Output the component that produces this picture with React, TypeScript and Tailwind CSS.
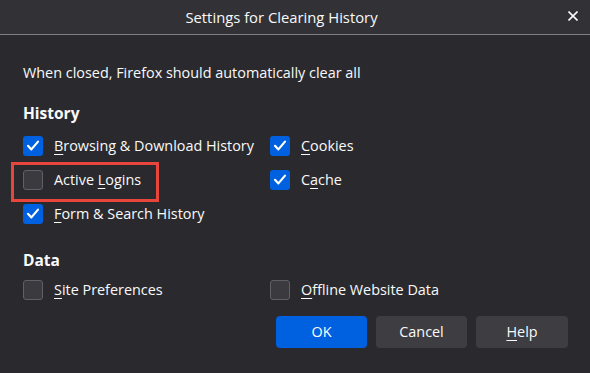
import React from "react";

// Firefox "Settings for Clearing History" dialog, dark theme

type Item = {
  label: string;
  key: number; // index of the access-key letter
  checked: boolean;
};

const historyLeft: Item[] = [
  { label: "Browsing & Download History", key: 0, checked: true },
  { label: "Active Logins", key: 7, checked: false },
  { label: "Form & Search History", key: 0, checked: true },
];

const historyRight: Item[] = [
  { label: "Cookies", key: 0, checked: true },
  { label: "Cache", key: 1, checked: true },
];

function AccessLabel({ text, index }: { text: string; index: number }) {
  return (
    <span>
      {text.slice(0, index)}
      <span className="underline underline-offset-[3px] decoration-1">{text[index]}</span>
      {text.slice(index + 1)}
    </span>
  );
}

function Checkbox({ item }: { item: Item }) {
  return (
    <div className="flex items-center h-[34px] gap-[11px]">
      {item.checked ? (
        <div className="w-5 h-5 rounded-[3px] bg-[#0061e0] flex items-center justify-center">
          <svg width="20" height="20" viewBox="0 0 20 20" fill="none">
            <path d="M5 9.8 L8.4 13.4 L15 5.6" stroke="#ffffff" strokeWidth="2.2" strokeLinecap="round" strokeLinejoin="round" />
          </svg>
        </div>
      ) : (
        <div className="w-5 h-5 rounded-[3px] bg-[#3a3a3f] border border-[#5f5f66]" />
      )}
      <AccessLabel text={item.label} index={item.key} />
    </div>
  );
}

export default function App() {
  return (
    <div
      className="w-[590px] h-[373px] bg-[#2a2a2e] text-[#f9f9fa] text-[14.4px] flex flex-col"
      style={{ fontFamily: "'Open Sans', 'Noto Sans', sans-serif" }}
    >
      {/* Title bar */}
      <div className="relative h-[35px] bg-[#323236] border-b border-[#7f7f84] flex items-center justify-center pr-[27px]">
        <span className="text-[14.8px]">Settings for Clearing History</span>
        <svg className="absolute right-[12px] top-[11px]" width="10" height="10" viewBox="0 0 10 10">
          <path d="M0.5 0.5 L9.5 9.5 M9.5 0.5 L0.5 9.5" stroke="#f9f9fa" strokeWidth="1.6" />
        </svg>
      </div>

      <div className="px-[23px] pt-[27px]">
        <p className="leading-[22px]">When closed, Firefox should automatically clear all</p>

        <h3 className="mt-[18px] text-[15.5px] font-bold leading-[22px]">History</h3>
        <div className="mt-[5px] grid grid-cols-[247px_1fr]">
          <div>
            {historyLeft.map((item) => (
              <div key={item.label} className="relative">
                {item.label === "Active Logins" && (
                  <div className="absolute left-[-12px] top-[-1px] w-[148px] h-[40px] border-[3px] border-[#e8453c]" />
                )}
                <Checkbox item={item} />
              </div>
            ))}
          </div>
          <div>
            {historyRight.map((item) => (
              <Checkbox key={item.label} item={item} />
            ))}
          </div>
        </div>

        <h3 className="mt-[18px] text-[15.5px] font-bold leading-[22px]">Data</h3>
        <div className="mt-[2px] grid grid-cols-[247px_1fr]">
          <Checkbox item={{ label: "Site Preferences", key: 0, checked: false }} />
          <Checkbox item={{ label: "Offline Website Data", key: 0, checked: false }} />
        </div>

        <div className="mt-[9px] flex justify-end gap-[9px] mr-[-1px]">
          <button className="w-[91px] h-[32px] rounded-[4px] bg-[#0061e0] text-white">OK</button>
          <button className="w-[91px] h-[32px] rounded-[4px] bg-[#3d3d42] text-[#f9f9fa]">Cancel</button>
          <button className="w-[92px] h-[32px] rounded-[4px] bg-[#3d3d42] text-[#f9f9fa]">
            <AccessLabel text="Help" index={0} />
          </button>
        </div>
      </div>
    </div>
  );
}
